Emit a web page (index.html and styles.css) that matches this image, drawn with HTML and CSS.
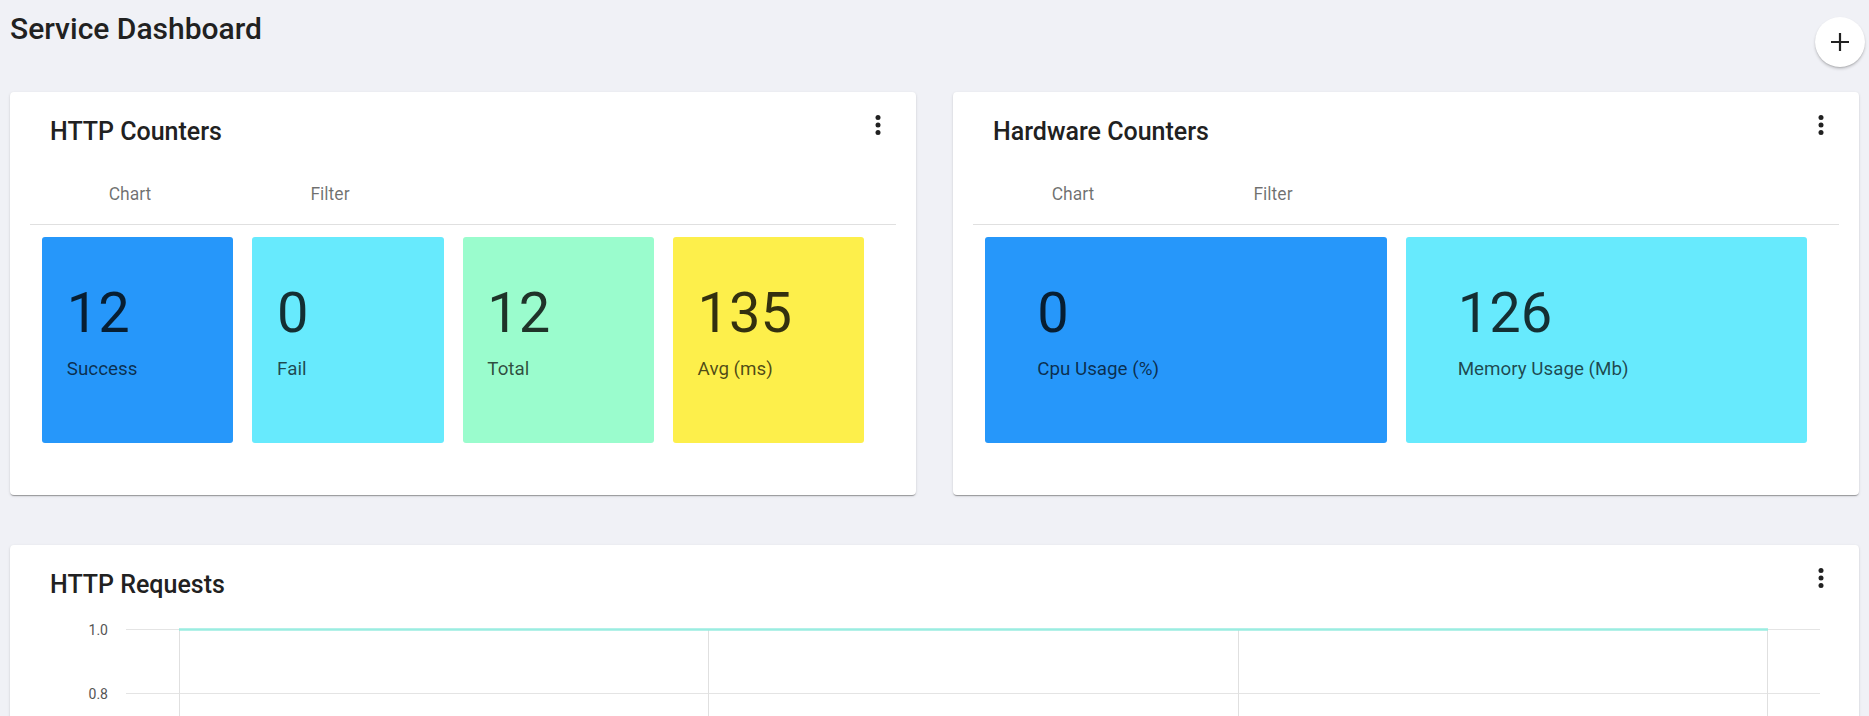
FILE: index.html
```html
<!DOCTYPE html>
<html lang="en">
<head>
<meta charset="utf-8">
<title>Service Dashboard</title>
<link rel="stylesheet" href="styles.css">
</head>
<body>
<div class="page">
  <header class="top">
    <h1 class="page-title">Service Dashboard</h1>
    <button class="fab" aria-label="Add">
      <svg width="18" height="18" viewBox="0 0 18 18"><path d="M9 0V18M0 9H18" stroke="#212121" stroke-width="2.2" fill="none"/></svg>
    </button>
  </header>

  <div class="row">
    <section class="card">
      <div class="card-head">
        <h2 class="card-title">HTTP Counters</h2>
        <button class="menu" aria-label="More">
          <svg width="30" height="30" viewBox="0 0 30 30"><circle cx="15" cy="7.5" r="2.5"/><circle cx="15" cy="15" r="2.5"/><circle cx="15" cy="22.5" r="2.5"/></svg>
        </button>
      </div>
      <nav class="tabs"><span class="tab">Chart</span><span class="tab">Filter</span></nav>
      <div class="tiles tiles-4">
        <div class="tile blue"><div class="num">12</div><div class="lbl">Success</div></div>
        <div class="tile cyan"><div class="num">0</div><div class="lbl">Fail</div></div>
        <div class="tile mint"><div class="num">12</div><div class="lbl">Total</div></div>
        <div class="tile yellow"><div class="num">135</div><div class="lbl">Avg (ms)</div></div>
      </div>
    </section>

    <section class="card">
      <div class="card-head">
        <h2 class="card-title">Hardware Counters</h2>
        <button class="menu" aria-label="More">
          <svg width="30" height="30" viewBox="0 0 30 30"><circle cx="15" cy="7.5" r="2.5"/><circle cx="15" cy="15" r="2.5"/><circle cx="15" cy="22.5" r="2.5"/></svg>
        </button>
      </div>
      <nav class="tabs"><span class="tab">Chart</span><span class="tab">Filter</span></nav>
      <div class="tiles tiles-2">
        <div class="tile blue"><div class="num">0</div><div class="lbl">Cpu Usage (%)</div></div>
        <div class="tile cyan"><div class="num">126</div><div class="lbl">Memory Usage (Mb)</div></div>
      </div>
    </section>
  </div>

  <section class="card chart-card">
    <div class="card-head">
      <h2 class="card-title">HTTP Requests</h2>
      <button class="menu" aria-label="More">
        <svg width="30" height="30" viewBox="0 0 30 30"><circle cx="15" cy="7.5" r="2.5"/><circle cx="15" cy="15" r="2.5"/><circle cx="15" cy="22.5" r="2.5"/></svg>
      </button>
    </div>
    <svg class="chart" width="1809" height="140" viewBox="0 0 1809 140">
      <g class="hgrid">
        <line x1="96" y1="28.5" x2="1790" y2="28.5"/>
        <line x1="96" y1="92.5" x2="1790" y2="92.5"/>
      </g>
      <g class="vgrid">
        <line x1="149.5" y1="28" x2="149.5" y2="140"/>
        <line x1="678.5" y1="28" x2="678.5" y2="140"/>
        <line x1="1208.5" y1="28" x2="1208.5" y2="140"/>
        <line x1="1737.5" y1="28" x2="1737.5" y2="140"/>
      </g>
      <g class="ylabels">
        <text x="78" y="33.5">1.0</text>
        <text x="78" y="97.5">0.8</text>
      </g>
      <line class="series" x1="149" y1="28.5" x2="1738" y2="28.5"/>
    </svg>
  </section>
</div>
</body>
</html>
```

FILE: styles.css
```css
* { box-sizing: border-box; }

html, body {
  margin: 0;
  background: #f0f1f6;
  font-family: Roboto, "Noto Sans", Arial, sans-serif;
  color: #212121;
}

.page {
  padding: 0 10px 0;
}

.top {
  display: flex;
  justify-content: space-between;
  align-items: flex-start;
  padding-top: 11px;
  margin-right: -6px;
  margin-bottom: 25px;
}

.page-title {
  margin: 0;
  font-size: 30px;
  line-height: 36px;
  font-weight: 500;
  color: #212121;
}

.fab {
  margin-top: 6px;
  width: 50px;
  height: 50px;
  border: none;
  border-radius: 50%;
  background: #fff;
  display: flex;
  align-items: center;
  justify-content: center;
  padding: 0;
  box-shadow: 0 2px 3px rgba(0,0,0,.18), 0 1px 1px rgba(0,0,0,.10);
}

.row {
  display: grid;
  grid-template-columns: 1fr 1fr;
  gap: 37px;
}

.card {
  background: #fff;
  border-radius: 4px;
  padding: 0 20px 52px;
  box-shadow: 0 2px 1px -1px rgba(0,0,0,.2), 0 1px 1px 0 rgba(0,0,0,.14), 0 1px 3px 0 rgba(0,0,0,.12);
}

.card-head {
  display: flex;
  justify-content: space-between;
  align-items: flex-start;
  padding: 23.5px 3px 0.5px 20px;
}

.card-title {
  margin: 0;
  font-size: 25px;
  line-height: 32px;
  font-weight: 500;
  color: #212121;
}

.menu {
  margin-top: -5.5px;
  width: 30px;
  height: 30px;
  padding: 0;
  border: none;
  background: transparent;
  fill: #212121;
}
.menu svg { display: block; }

.tabs {
  display: flex;
  margin-top: 16px;
  height: 61px;
  border-bottom: 1px solid #e0e0e0;
}

.tab {
  width: 200px;
  text-align: center;
  font-size: 17.5px;
  line-height: 60px;
  font-weight: 400;
  color: rgba(0,0,0,.56);
}

.tiles {
  display: grid;
  gap: 19px;
  width: 822px;
  margin: 12px 0 0 12px;
}
.tiles-4 { grid-template-columns: repeat(4, 1fr); }
.tiles-2 { grid-template-columns: repeat(2, 1fr); }

.tile {
  height: 206px;
  border-radius: 3px;
  padding: 41px 0 0 13%;
}
.blue { background: #2697fa; }
.cyan { background: #67eafd; }
.mint { background: #9afccd; }
.yellow { background: #fdef4b; }

.num {
  font-size: 56px;
  line-height: 70px;
  font-weight: 400;
  color: rgba(0,0,0,.8);
}

.lbl {
  margin-top: 9px;
  font-size: 18.8px;
  line-height: 24px;
  color: rgba(0,0,0,.7);
}

.chart-card {
  margin-top: 50px;
  padding-bottom: 20px;
}

.chart {
  display: block;
}
.hgrid line { stroke: #e4e4e4; stroke-width: 1; }
.vgrid line { stroke: #e0e0e0; stroke-width: 1; }
.ylabels text {
  font-family: Roboto, Arial, sans-serif;
  font-size: 14px;
  fill: #555;
  text-anchor: end;
}
.series { stroke: #9aede1; stroke-width: 2.5; }
```
